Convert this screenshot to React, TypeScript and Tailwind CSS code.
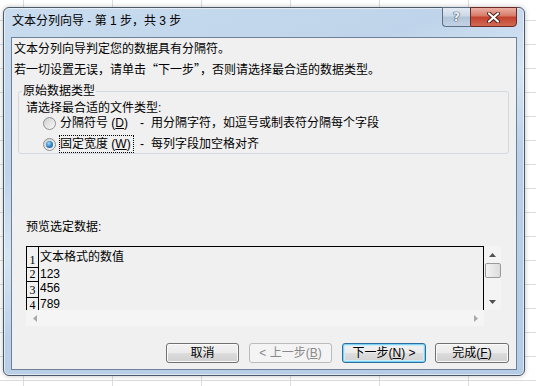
import React from "react";

function Radio({ checked }: { checked?: boolean }) {
  return (
    <span className="flex h-[13px] w-[13px] shrink-0 items-center justify-center rounded-full border border-[#8e8f8f] bg-[linear-gradient(135deg,#cfcfcf,#f9f9f9)]">
      {checked && (
        <span className="h-[7px] w-[7px] rounded-full bg-[radial-gradient(circle_at_40%_35%,#a5dcfa_0%,#3b8ccc_45%,#0f4a80_100%)]" />
      )}
    </span>
  );
}

function Arrow({ dir, color }: { dir: "up" | "down" | "left" | "right"; color: string }) {
  const pts: Record<string, string> = {
    up: "0,4 3.5,0 7,4",
    down: "0,0 3.5,4 7,0",
    left: "4,0 0,3.5 4,7",
    right: "0,0 4,3.5 0,7",
  };
  const vertical = dir === "up" || dir === "down";
  return (
    <svg width={vertical ? 7 : 4} height={vertical ? 4 : 7} viewBox={vertical ? "0 0 7 4" : "0 0 4 7"}>
      <polygon points={pts[dir]} fill={color} />
    </svg>
  );
}

function Btn({
  w,
  children,
  kind = "normal",
}: {
  w: string;
  children: React.ReactNode;
  kind?: "normal" | "disabled" | "default";
}) {
  const base = "flex h-[20px] items-center justify-center rounded-[3px] border text-[12px] leading-[14px]";
  if (kind === "disabled")
    return (
      <div className={`${base} ${w} border-[#b8bcbf] bg-[#f4f4f4] text-[#8a8a8a]`}>{children}</div>
    );
  if (kind === "default")
    return (
      <div
        className={`${base} ${w} border-[#2f6d9c] bg-[linear-gradient(#f3f3f3_0%,#ebebeb_50%,#dedede_50%,#d2d2d2_100%)] text-black shadow-[inset_0_0_0_1px_#7fd2f0,inset_0_0_0_2px_#c8ecf8]`}
      >
        {children}
      </div>
    );
  return (
    <div
      className={`${base} ${w} border-[#707070] bg-[linear-gradient(#f2f2f2_0%,#ebebeb_50%,#dddddd_50%,#cfcfcf_100%)] text-black shadow-[inset_0_0_0_1px_#fbfbfb]`}
    >
      {children}
    </div>
  );
}

export default function App() {
  const rows = [
    { n: "1", t: "文本格式的数值", h: "h-[21px]", c: "items-center" },
    { n: "2", t: "123", h: "h-[14px]", c: "items-start" },
    { n: "3", t: "456", h: "h-[16px]", c: "items-start" },
    { n: "4", t: "789", h: "h-[15px]", c: "items-start" },
  ];
  return (
    <div className="h-[386px] w-[536px] overflow-hidden bg-white bg-[linear-gradient(to_right,#dadcdd_1px,transparent_1px),linear-gradient(to_bottom,#dadcdd_1px,transparent_1px)] pl-[3px] pt-[7px] font-['Liberation_Sans','Noto_Sans_CJK_SC',sans-serif] text-[12px] text-black [background-position:23px_20px] [background-size:89px_24px]">
      <div className="flex h-[369px] w-[522px] flex-col rounded-[6px] border border-[#4b5867] bg-[linear-gradient(160deg,#c9dcef_0%,#bfd4ea_30%,#d6e5f4_45%,#bad0e8_60%,#b4cce6_100%)] px-[7px] pb-[5px] shadow-[inset_0_0_0_1px_rgba(255,255,255,0.55),0_0_5px_rgba(0,0,0,0.25)]">
        {/* title bar */}
        <div className="flex h-[29px] shrink-0 items-start justify-between">
          <div className="ml-[1px] mt-[5px] text-[12px] leading-[16px] text-black">文本分列向导 - 第 1 步，共 3 步</div>
          <div className="-mt-[1px] flex">
            <div className="flex h-[20px] w-[28px] items-center justify-center rounded-bl-[4px] border border-r-0 border-[#5b6f86] bg-[linear-gradient(#e2eaf3_0%,#cbd8e6_45%,#b2c4d8_50%,#c3d3e4_100%)]">
              <span className="font-['DejaVu_Sans',sans-serif] text-[12px] font-bold leading-[12px] text-[#eef3f8] [text-shadow:0_0_1px_#3d4f63,0_0_1px_#3d4f63,0_0_1px_#3d4f63]">
                ?
              </span>
            </div>
            <div className="flex h-[20px] w-[47px] items-center justify-center rounded-br-[4px] border border-[#6b2a22] bg-[linear-gradient(#eab0a4_0%,#d77966_45%,#c2412d_50%,#d26a55_100%)]">
              <svg width="13" height="11" viewBox="0 0 13 11">
                <path d="M2 1.5 L11 9.5 M11 1.5 L2 9.5" stroke="#4a1f19" strokeWidth="4" strokeLinecap="round" />
                <path d="M2 1.5 L11 9.5 M11 1.5 L2 9.5" stroke="#ffffff" strokeWidth="2.2" strokeLinecap="round" />
              </svg>
            </div>
          </div>
        </div>

        {/* client area */}
        <div className="flex flex-1 flex-col border border-[#6f819a] bg-[#f0f0f0] pb-[6px]">
          <div className="pl-[2px] pt-[1px] leading-[20px]">
            <div>文本分列向导判定您的数据具有分隔符。</div>
            <div>
              若一切设置无误，请单击<span className="font-['Noto_Sans_CJK_SC',sans-serif]">“</span>下一步
              <span className="font-['Noto_Sans_CJK_SC',sans-serif]">”</span>，否则请选择最合适的数据类型。
            </div>
          </div>

          <fieldset className="ml-[6px] mr-[7px] mt-[3px] rounded-[3px] border border-[#d2d9de]">
            <legend className="ml-[3px] px-[1px] leading-[16px]">原始数据类型</legend>
            <div className="ml-[7px] mt-[2px] h-[15px] leading-[15px]">请选择最合适的文件类型:</div>
            <div className="ml-[24px] flex h-[14px] items-center">
              <Radio />
              <span className="ml-[3px] flex h-[18px] w-[75px] items-center border border-transparent">
                分隔符号 (<span className="underline">D</span>)
              </span>
              <span className="ml-[6px] w-[11px]">-</span>
              <span>用分隔字符，如逗号或制表符分隔每个字段</span>
            </div>
            <div className="ml-[24px] mt-[5px] flex h-[18px] items-center">
              <Radio checked />
              <span className="ml-[3px] flex h-[18px] w-[75px] items-center border border-dotted border-black">
                固定宽度 (<span className="underline">W</span>)
              </span>
              <span className="ml-[6px] w-[11px]">-</span>
              <span>每列字段加空格对齐</span>
            </div>
          </fieldset>

          <div className="ml-[14px] mt-[65px] h-[16px] leading-[16px]">预览选定数据:</div>

          <div className="ml-[14px] mt-[11px] grid h-[80px] w-[475px] grid-cols-[458px_17px] grid-rows-[64px_16px]">
            <div className="flex flex-col overflow-hidden border-l border-r border-t border-black">
              {rows.map((r) => (
                <div key={r.n} className={`flex shrink-0 ${r.h}`}>
                  <div className="flex w-[12px] shrink-0 items-end justify-center border-b border-r border-black font-['Liberation_Serif','Noto_Sans_CJK_SC',serif] text-[12px] leading-[13px]">
                    {r.n}
                  </div>
                  <div className={`flex pl-[1px] leading-[13px] ${r.c}`}>{r.t}</div>
                </div>
              ))}
            </div>
            <div className="flex flex-col items-center bg-[#f4f4f4]">
              <div className="flex h-[17px] items-center justify-center">
                <Arrow dir="up" color="#505050" />
              </div>
              <div className="h-[15px] w-[16px] rounded-[2px] border border-[#9a9a9a] bg-[linear-gradient(to_right,#f4f4f4,#dcdcdc)]" />
              <div className="flex-1" />
              <div className="flex h-[17px] items-center justify-center">
                <Arrow dir="down" color="#505050" />
              </div>
            </div>
            <div className="flex items-center justify-between bg-[#f5f5f5]">
              <div className="flex w-[17px] items-center justify-center">
                <Arrow dir="left" color="#a8a8a8" />
              </div>
              <div className="flex w-[17px] items-center justify-center">
                <Arrow dir="right" color="#a8a8a8" />
              </div>
            </div>
            <div className="bg-[#f0f0f0]" />
          </div>

          <div className="mt-auto flex justify-end pr-[7px]">
            <Btn w="w-[73px]">取消</Btn>
            <div className="ml-[10px]">
              <Btn w="w-[83px]" kind="disabled">
                &lt; 上一步(<span className="underline">B</span>)
              </Btn>
            </div>
            <div className="ml-[10px]">
              <Btn w="w-[84px]" kind="default">
                下一步(<span className="underline">N</span>) &gt;
              </Btn>
            </div>
            <div className="ml-[9px]">
              <Btn w="w-[74px]">
                完成(<span className="underline">F</span>)
              </Btn>
            </div>
          </div>
        </div>
      </div>
    </div>
  );
}
